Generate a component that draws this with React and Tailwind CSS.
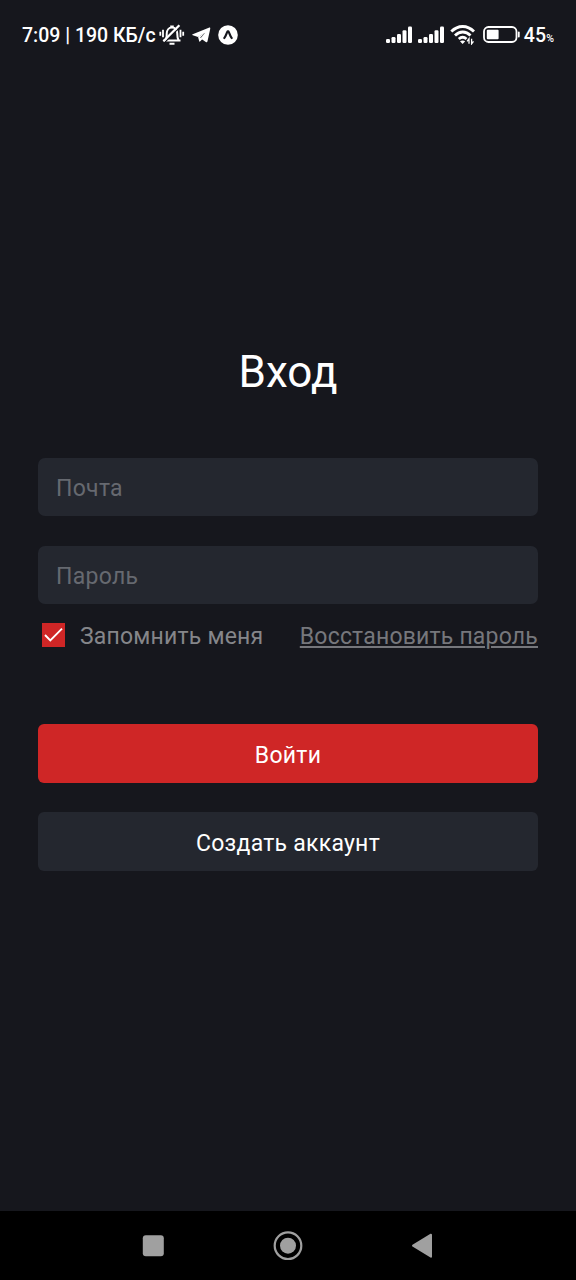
function MutedBell() {
  return (
    <svg width="26" height="22" viewBox="0 0 26 22" fill="none" stroke="#fff" strokeWidth="2">
      <path d="M4.500 16.400h17M6.700 15.800c1.200-1.600 1-3.300 1-6 0-3.500 2-6.200 5.300-6.200s5.300 2.700 5.300 6.200c0 2.700-.1 4.400 1.200 6.300M11.200 2.400h3.600M10.500 19.700h5" />
      <path d="M6 18 21.700 2.400" stroke="#16171d" strokeWidth="1.200" />
      <path d="M4.400 17.200 20.400 1.300" strokeWidth="2.300" />
      <path d="M4 5.800v7.500M1.300 7.800v4M21.500 5.800v7.500M24.200 7.800v4" strokeWidth="1.800" />
    </svg>
  );
}

function Telegram() {
  return (
    <svg width="19" height="16" viewBox="0 0 19 16" fill="#fff">
      <path d="M.7 7.200 16.800.7c1-.4 1.700.1 1.400 1.300l-2.700 12.300c-.2 1-.9 1.200-1.700.7L8.500 11.300 13.200 5.800 6 9.900.8 8.200c-.8-.3-.8-.7-.1-1Z" />
      <path d="m6 9.800 1.200 4.500c.1.500.5.500.8.200L10.500 12 8.200 10.600l5-4.900Z" />
    </svg>
  );
}

function Expo() {
  return (
    <svg width="20" height="20" viewBox="0 0 20 20">
      <circle cx="10" cy="10" r="9.800" fill="#fff" />
      <path d="M6.300 13C8 11.300 8.800 7.200 9.700 6.300h.6c.9.900 1.700 5 3.400 6.700" fill="none" stroke="#16171d" strokeWidth="2.200" strokeLinecap="round" strokeLinejoin="round" />
    </svg>
  );
}

function Signal() {
  return (
    <svg width="26" height="18" viewBox="0 0 26 18" fill="#fff">
      <rect x="0" y="13" width="4" height="4" rx="1.200" />
      <rect x="5.500" y="11" width="4" height="6" rx="1.200" />
      <rect x="11" y="8" width="4" height="9" rx="1.200" />
      <rect x="16.500" y="4.300" width="4" height="12.700" rx="1.200" />
      <rect x="22" y=".5" width="4" height="16.500" rx="1.200" />
    </svg>
  );
}

function Wifi() {
  return (
    <svg width="26" height="20" viewBox="0 0 26 20" fill="none" stroke="#fff">
      <path d="M1.300 6.600C8-.2 17.300-.2 24 6.600M5 10.500c4.700-4.700 10.800-4.700 15.500 0M8.800 14c2.400-2.300 5.300-2.300 7.700 0" strokeWidth="2.800" />
      <path d="m12.600 19-2.600-2.700c1.600-1.200 3.600-1.200 5.200 0Z" fill="#fff" stroke="none" />
      <path d="M19 18.800v-5l-1.900 2.500M21.600 13.800v5l1.900-2.500" strokeWidth="1.300" />
    </svg>
  );
}

function Battery() {
  return (
    <svg width="38" height="18" viewBox="0 0 38 18">
      <rect x="1" y="1" width="32.500" height="15" rx="4.500" fill="none" stroke="#fff" strokeWidth="1.800" />
      <rect x="3.800" y="3.700" width="11.800" height="9.600" rx="1" fill="#fff" />
      <path d="M35.800 6.500v4" stroke="#fff" strokeWidth="1.800" strokeLinecap="round" />
    </svg>
  );
}

function StatusBar() {
  return (
    <header className="flex h-[69px] shrink-0 items-center pl-[22px] pr-[22px] text-[19.5px] font-medium text-white">
      <span className="w-[137px] whitespace-nowrap pt-[2px]">7:09 | 190 КБ/с</span>
      <div className="flex items-center">
        <MutedBell />
        <span className="ml-[7px] flex"><Telegram /></span>
        <span className="ml-[7px] flex"><Expo /></span>
      </div>
      <div className="ml-auto flex items-center">
        <Signal />
        <span className="ml-1.5 flex"><Signal /></span>
        <span className="ml-1.5 flex"><Wifi /></span>
        <span className="ml-[7px] flex"><Battery /></span>
        <span className="ml-[3px] flex items-baseline pt-[2px] tracking-[0.2px]">
          45<span className="text-[10.5px] tracking-normal">%</span>
        </span>
      </div>
    </header>
  );
}

function Field({ label, type }) {
  return (
    <input
      type={type}
      aria-label={label}
      placeholder={label}
      className="block h-[58px] w-full rounded-[7px] bg-[#24272f] px-[18px] pt-0.5 text-[23px] tracking-[0.3px] text-white outline-none placeholder:text-[#666970]"
    />
  );
}

export default function App() {
  return (
    <div className="flex h-[1280px] w-[576px] flex-col overflow-hidden bg-[#16171d] font-['Roboto',sans-serif]">
      <StatusBar />
      <main className="flex flex-1 flex-col px-[38px] pt-[277px] text-[23px] tracking-[0.25px]">
        <h1 className="text-center text-[44px] leading-[52px] tracking-[0px] text-white">Вход</h1>
        <form className="mt-[60px] flex flex-col">
          <div className="flex flex-col gap-[30px]">
            <Field label="Почта" type="email" />
            <Field label="Пароль" type="password" />
          </div>
          <div className="mt-[16px] flex h-8 items-center justify-between pl-[4px] tracking-[0.2px] text-[#85868a]">
            <label className="flex items-center whitespace-nowrap">
              <svg width="23" height="24" viewBox="0 0 23 24" className="mr-[15px] -mt-[2px]">
                <rect width="23" height="24" fill="#cf2626" />
                <path d="m3 12 5.300 5.300L20 5.700" fill="none" stroke="#fff" strokeWidth="1.900" />
              </svg>
              <span className="pt-[2px]">Запомнить меня</span>
            </label>
            <a className="whitespace-nowrap pt-[2px] text-[#76777c] underline decoration-[1.500px] underline-offset-[2px]">Восстановить пароль</a>
          </div>
          <button type="button" className="mt-[72px] h-[59px] rounded-[6px] bg-[#cf2626] pt-[5px] text-white">Войти</button>
          <button type="button" className="mt-[29px] h-[59px] rounded-[6px] bg-[#24272f] pt-[5px] text-white">Создать аккаунт</button>
        </form>
      </main>
      <nav className="flex h-[69px] shrink-0 items-center justify-between bg-black pl-[142px] pr-[143px]">
        <svg width="22" height="22" viewBox="0 0 22 22"><rect x=".8" y=".2" width="21" height="21" rx="3" fill="#a0a0a0" /></svg>
        <svg width="30" height="30" viewBox="0 0 30 30"><circle cx="15" cy="14.700" r="13.300" fill="none" stroke="#a0a0a0" strokeWidth="2.200" /><circle cx="15" cy="14.700" r="8" fill="#a0a0a0" /></svg>
        <svg width="22" height="26" viewBox="0 0 22 26"><path d="M2 12.700 20 1.700v22Z" fill="#a0a0a0" stroke="#a0a0a0" strokeWidth="2" strokeLinejoin="round" /></svg>
      </nav>
    </div>
  );
}
